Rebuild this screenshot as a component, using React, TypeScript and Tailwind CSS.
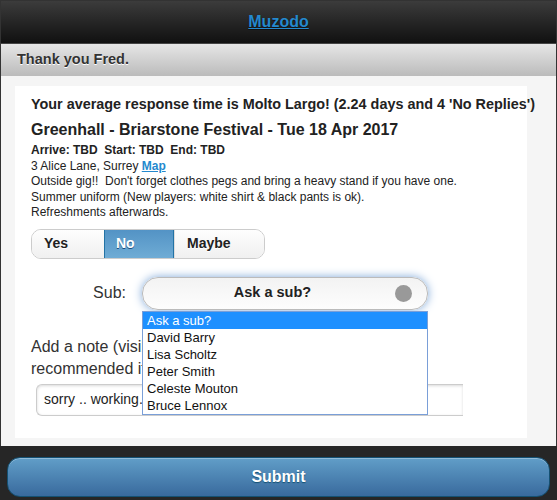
const SUBS = ['Ask a sub?', 'David Barry', 'Lisa Scholtz', 'Peter Smith', 'Celeste Mouton', 'Bruce Lennox'];

export default function App() {
  return (
    <div className="relative h-[500px] w-[557px] overflow-hidden bg-[#262626] font-['Liberation_Sans',Arial,sans-serif] text-[#333]">
      {/* header */}
      <header className="flex h-[44px] items-center justify-center border border-b-[#444] border-[#333] bg-gradient-to-b from-[#3c3c3c] to-[#111]">
        <a href="#" className="text-[16px] font-bold text-[#2489ce] underline [text-shadow:0_1px_1px_#111]">
          Muzodo
        </a>
      </header>

      <div className="flex h-[32px] items-center border-x border-[#333] bg-gradient-to-b from-[#e6e6e6] to-[#bbb] pl-[16px] text-[14.5px] font-bold text-[#333] [text-shadow:0_1px_0_#fff]">
        Thank you Fred.
      </div>

      {/* content */}
      <main className="h-[370px] border-x border-[#333] bg-[#f5f5f5] pl-[14px] pr-[29px] pt-[10px]">
        <div className="h-[352px] bg-white pl-[16px] pt-[9px] text-[#222]">
          <p className="whitespace-nowrap text-[14.4px] font-bold leading-[18px]">
            Your average response time is Molto Largo! (2.24 days and 4 'No Replies')
          </p>
          <h2 className="mt-[6px] text-[16px] font-bold leading-[22px]">
            Greenhall - Briarstone Festival - Tue 18 Apr 2017
          </h2>
          <div className="mt-[2px] text-[12px] leading-[15.5px]">
            <p className="font-bold">Arrive: TBD&nbsp; Start: TBD&nbsp; End: TBD</p>
            <p>
              3 Alice Lane, Surrey{' '}
              <a href="#" className="font-bold text-[#2489ce] underline">
                Map
              </a>
            </p>
            <p>Outside gig!!&nbsp; Don't forget clothes pegs and bring a heavy stand if you have one.</p>
            <p>Summer uniform (New players: white shirt &amp; black pants is ok).</p>
            <p>Refreshments afterwards.</p>
          </div>

          {/* yes / no / maybe */}
          <div className="mt-[8px] flex h-[30px] w-[234px] overflow-hidden rounded-[10px] border border-[#ccc] text-[14px] font-bold">
            <button className="w-[72px] bg-gradient-to-b from-[#fefefe] to-[#f0f0f0] pl-[12px] text-left text-[#222] [text-shadow:0_1px_0_#fff]">
              Yes
            </button>
            <button className="-my-px w-[70px] border border-[#2373a5] bg-gradient-to-b from-[#5393c5] to-[#6facd5] pl-[11px] text-left text-white [text-shadow:0_1px_0_#194b7e]">
              No
            </button>
            <button className="flex-1 border-l border-[#ddd] bg-gradient-to-b from-[#fefefe] to-[#f0f0f0] pl-[12px] text-left text-[#222] [text-shadow:0_1px_0_#fff]">
              Maybe
            </button>
          </div>

          {/* sub select */}
          <div className="mt-[18px] flex items-center">
            <span className="w-[95px] text-right text-[16px] text-[#333]">Sub:</span>
            <div className="relative ml-[16px] flex h-[33px] w-[286px] items-center justify-center rounded-[16px] border border-[#bbb] bg-gradient-to-b from-[#f3f3f3] to-[#fdfdfd] pr-[25px] text-[14.5px] font-bold text-[#222] shadow-[0_0_10px_#7ea7d8]">
              Ask a sub?
              <span className="absolute right-[15px] top-[7px] h-[17px] w-[17px] rounded-full bg-[#999]" />
            </div>
          </div>

          {/* note */}
          <p className="mt-[26px] w-[260px] text-[16px] leading-[22px] text-[#333]">
            Add a note (visible to everyone) recommended if you can't attend:
          </p>
          <div className="ml-[5px] mt-[4px] flex h-[32px] w-[427px] items-center rounded-l-[6px] border border-r-0 border-[#ccc] pl-[7px] text-[14px] text-[#222] shadow-[inset_0_1px_3px_rgba(0,0,0,0.15)]">
            sorry .. working...
          </div>
        </div>
      </main>

      {/* dropdown list open over the form */}
      <ul className="absolute left-[142px] top-[311px] w-[286px] border border-[#7a9fd8] bg-white text-[13px] text-[#111]">
        {SUBS.map((s, i) => (
          <li
            key={s}
            className={`h-[17px] pl-[4px] leading-[17px] ${i === 0 ? 'bg-[#1e90ff] text-white' : ''}`}
          >
            {s}
          </li>
        ))}
      </ul>

      {/* footer */}
      <footer className="px-[7px] pt-[11px]">
        <button className="flex h-[40px] w-full items-center justify-center rounded-[13px] border border-[#145072] bg-gradient-to-b from-[#619ec8] to-[#396a9d] text-[16px] font-bold text-white shadow-[inset_0_1px_0_rgba(255,255,255,0.3)] [text-shadow:0_1px_1px_#145072]">
          Submit
        </button>
      </footer>
    </div>
  );
}
